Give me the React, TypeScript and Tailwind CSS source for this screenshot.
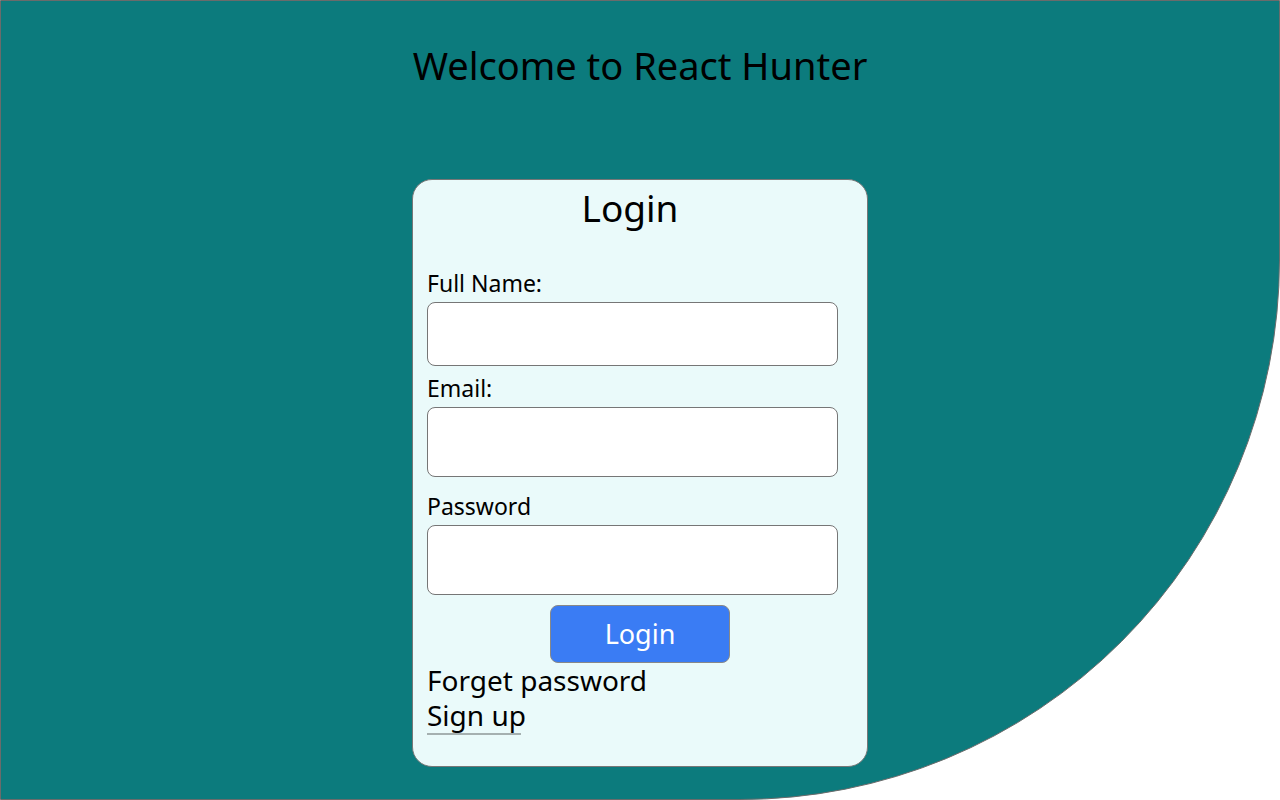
import React from "react"

const font = { fontFamily: '"Noto Sans", "Open Sans", sans-serif' }

function Field({ label, top, h }: { label: string; top: string; h: string }) {
    return (
        <div className={`flex flex-col ${top}`}>
            <label className="text-[23px] leading-[26px] text-black">{label}</label>
            <input className={`mt-[6px] w-[411px] ${h} rounded-lg border border-[#767676] bg-white px-2`} />
        </div>
    )
}

export default function App() {
    return (
        <div className="w-[1280px] h-[800px] bg-white" style={font}>
            <div className="w-full h-full bg-[#0c7b7d] border border-[#6b6b6b] rounded-br-[540px] flex flex-col items-center">
                <h1 className="mt-[39px] text-[38px] leading-[50px] text-black">Welcome to React Hunter</h1>
                <div className="mt-[89px] w-[456px] h-[588px] bg-[#eafafa] border border-[#777] rounded-[20px] px-[14px] flex flex-col">
                    <h2 className="text-center text-[37px] leading-[52px] pt-[2px] pr-[20px] text-black">Login</h2>
                    <form className="flex flex-col">
                        <Field label="Full Name:" top="mt-[36px]" h="h-[64px]" />
                        <Field label="Email:" top="mt-[9px]" h="h-[70px]" />
                        <Field label="Password" top="mt-[16px]" h="h-[70px]" />
                        <button type="button" className="self-center mt-[10px] w-[180px] h-[58px] rounded-lg border border-[#888] bg-[#3a7cf4] text-white text-[27px]">Login</button>
                    </form>
                    <a className="mt-[1px] text-[28px] leading-[33px] text-black">Forget password</a>
                    <a className="inline-block w-[94px] whitespace-nowrap text-[28px] leading-[36px] text-black border-b-2 border-[#a5b0b0]">Sign up</a>
                </div>
            </div>
        </div>
    )
}
